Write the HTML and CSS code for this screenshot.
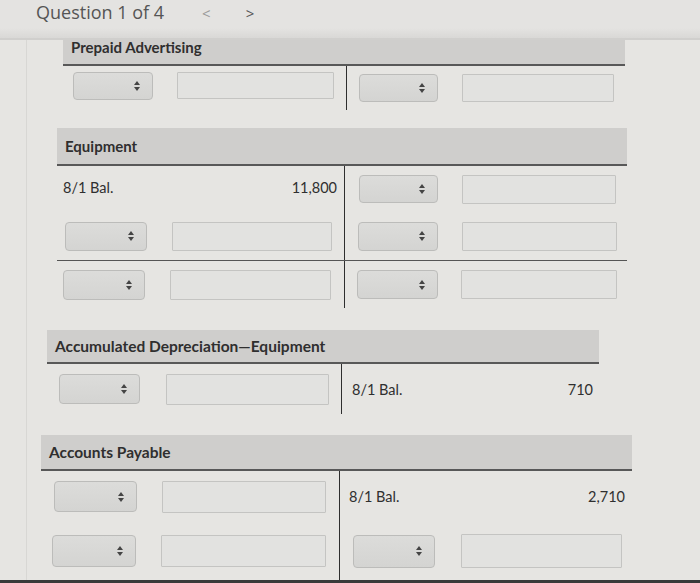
FILE: index.html
```html
<!DOCTYPE html>
<html>
<head>
<meta charset="utf-8">
<link rel="stylesheet" href="styles.css">
</head>
<body>
<div class="topbar">
  <span class="q-title">Question 1 of 4</span>
  <span class="nav prev">&lt;</span>
  <span class="nav next">&gt;</span>
</div>
<div class="page">

  <section class="t t-prepaid">
    <div class="t-head">Prepaid Advertising</div>
    <div class="t-line">
      <div class="cell left">
        <div class="sel s1"><svg viewBox="0 0 6 10" class="arr"><path d="M3 0L6 4H0Z M3 10L0 6H6Z"/></svg></div>
        <input class="inp i1" type="text">
      </div>
      <div class="cell right">
        <div class="sel s2"><svg viewBox="0 0 6 10" class="arr"><path d="M3 0L6 4H0Z M3 10L0 6H6Z"/></svg></div>
        <input class="inp i2" type="text">
      </div>
    </div>
  </section>

  <section class="t t-equip">
    <div class="t-head">Equipment</div>
    <div class="t-line r1">
      <div class="cell left text"><span>8/1 Bal.</span><span>11,800</span></div>
      <div class="cell right">
        <div class="sel s2"><svg viewBox="0 0 6 10" class="arr"><path d="M3 0L6 4H0Z M3 10L0 6H6Z"/></svg></div>
        <input class="inp i2" type="text">
      </div>
    </div>
    <div class="t-line r2">
      <div class="cell left">
        <div class="sel s1"><svg viewBox="0 0 6 10" class="arr"><path d="M3 0L6 4H0Z M3 10L0 6H6Z"/></svg></div>
        <input class="inp i1" type="text">
      </div>
      <div class="cell right">
        <div class="sel s2"><svg viewBox="0 0 6 10" class="arr"><path d="M3 0L6 4H0Z M3 10L0 6H6Z"/></svg></div>
        <input class="inp i2" type="text">
      </div>
    </div>
    <div class="t-line r3">
      <div class="cell left">
        <div class="sel s1"><svg viewBox="0 0 6 10" class="arr"><path d="M3 0L6 4H0Z M3 10L0 6H6Z"/></svg></div>
        <input class="inp i1" type="text">
      </div>
      <div class="cell right">
        <div class="sel s2"><svg viewBox="0 0 6 10" class="arr"><path d="M3 0L6 4H0Z M3 10L0 6H6Z"/></svg></div>
        <input class="inp i2" type="text">
      </div>
    </div>
  </section>

  <section class="t t-accum">
    <div class="t-head">Accumulated Depreciation&#8212;Equipment</div>
    <div class="t-line">
      <div class="cell left">
        <div class="sel s1"><svg viewBox="0 0 6 10" class="arr"><path d="M3 0L6 4H0Z M3 10L0 6H6Z"/></svg></div>
        <input class="inp i1" type="text">
      </div>
      <div class="cell right text"><span>8/1 Bal.</span><span>710</span></div>
    </div>
  </section>

  <section class="t t-ap">
    <div class="t-head">Accounts Payable</div>
    <div class="t-line r1">
      <div class="cell left">
        <div class="sel s1"><svg viewBox="0 0 6 10" class="arr"><path d="M3 0L6 4H0Z M3 10L0 6H6Z"/></svg></div>
        <input class="inp i1" type="text">
      </div>
      <div class="cell right text"><span>8/1 Bal.</span><span>2,710</span></div>
    </div>
    <div class="t-line r2">
      <div class="cell left">
        <div class="sel s1"><svg viewBox="0 0 6 10" class="arr"><path d="M3 0L6 4H0Z M3 10L0 6H6Z"/></svg></div>
        <input class="inp i1" type="text">
      </div>
      <div class="cell right">
        <div class="sel s2"><svg viewBox="0 0 6 10" class="arr"><path d="M3 0L6 4H0Z M3 10L0 6H6Z"/></svg></div>
        <input class="inp i2" type="text">
      </div>
    </div>
  </section>

</div>
<div class="bezel"></div>
</body>
</html>
```

FILE: styles.css
```css
html, body {
  margin: 0;
  padding: 0;
}
body {
  width: 700px;
  height: 583px;
  overflow: hidden;
  background: #e6e5e2;
  font-family: Lato, "Liberation Sans", sans-serif;
  color: #2f2f2f;
  display: flex;
  flex-direction: column;
}
.topbar {
  height: 38px;
  flex: 0 0 38px;
  background: linear-gradient(#e4e3e1 0, #e4e3e1 28px, #d9d8d6 38px);
  border-bottom: 2px solid #d0cfcd;
  display: flex;
  align-items: center;
  font-family: "Open Sans", "Liberation Sans", sans-serif;
  color: #555;
  position: relative;
  z-index: 2;
}
.q-title {
  font-size: 18px;
  margin-left: 36px;
  margin-top: -14px;
}
.nav {
  font-size: 15px;
  margin-top: -12px;
  color: #9a9a9a;
}
.prev { margin-left: 38px; }
.next { margin-left: 35px; color: #555; }

.page {
  flex: 1 1 auto;
  border-left: 1px solid #d8d7d4;
  margin-left: 26px;
}

.t-head {
  background: #cfcecc;
  border-bottom: 2px solid #585858;
  font-weight: 700;
  font-size: 15px;
  display: flex;
  align-items: center;
  padding-left: 8px;
}
.t-line {
  display: grid;
}
.cell {
  display: flex;
  align-items: center;
}
.cell.right {
  border-left: 1px solid #2e2e2e;
}
.cell.text {
  justify-content: space-between;
  font-size: 14.5px;
}
.sel {
  box-sizing: border-box;
  background: linear-gradient(#dcdcda, #d4d4d2);
  border: 1px solid #bcbcba;
  border-radius: 4px;
  display: flex;
  align-items: center;
  justify-content: flex-end;
  padding-right: 12px;
}
.arr {
  width: 6px;
  height: 10px;
  fill: #444;
}
.inp {
  box-sizing: border-box;
  background: #e2e2e0;
  border: 1px solid #c4c4c2;
  border-radius: 1px;
  margin: 0;
  padding: 0;
  outline: none;
}

/* Prepaid Advertising */
.t-prepaid {
  margin-left: 36px;
  width: 562px;
}
.t-prepaid .t-head {
  height: 24px;
  align-items: flex-start;
  line-height: 14px;
}
.t-prepaid .t-line {
  grid-template-columns: 283px 1fr;
  height: 44px;
}
.t-prepaid .left { padding-left: 10px; align-items: flex-start; padding-top: 6px; }
.t-prepaid .right { padding-left: 12px; align-items: flex-start; padding-top: 8px; }
.t-prepaid .left .sel { width: 80px; height: 28px; }
.t-prepaid .left .inp { width: 157px; height: 27px; margin-left: 24px; }
.t-prepaid .right .sel { width: 79px; height: 28px; }
.t-prepaid .right .inp { width: 152px; height: 28px; margin-left: 24px; }

/* Equipment */
.t-equip {
  margin-left: 30px;
  margin-top: 18px;
  width: 570px;
}
.t-equip .t-head { height: 36px; padding-top: 0; }
.t-equip .t-line { grid-template-columns: 287px 1fr; }
.t-equip .r1 { height: 46px; }
.t-equip .r2 { height: 48px; }
.t-equip .r3 { height: 47px; border-top: 1px solid #555; }
.t-equip .r1 .left { padding: 0 7px 0 6px; align-items: flex-start; padding-top: 13px; }
.t-equip .r1 .right { padding-left: 14px; }
.t-equip .r1 .right .sel { width: 79px; height: 28px; }
.t-equip .r1 .right .inp { width: 154px; height: 29px; margin-left: 24px; }
.t-equip .r2 .left { padding-left: 8px; }
.t-equip .r2 .left .sel { width: 82px; height: 29px; }
.t-equip .r2 .left .inp { width: 160px; height: 29px; margin-left: 25px; }
.t-equip .r2 .right { padding-left: 13px; }
.t-equip .r2 .right .sel { width: 80px; height: 29px; }
.t-equip .r2 .right .inp { width: 155px; height: 29px; margin-left: 24px; }
.t-equip .r3 .left { padding-left: 6px; }
.t-equip .r3 .left .sel { width: 82px; height: 30px; }
.t-equip .r3 .left .inp { width: 161px; height: 30px; margin-left: 25px; }
.t-equip .r3 .right { padding-left: 12px; }
.t-equip .r3 .right .sel { width: 81px; height: 29px; }
.t-equip .r3 .right .inp { width: 156px; height: 29px; margin-left: 23px; }

/* Accumulated Depreciation */
.t-accum {
  margin-left: 20px;
  margin-top: 22px;
  width: 552px;
}
.t-accum .t-head { height: 32px; font-size: 15.5px; }
.t-accum .t-line { grid-template-columns: 294px 1fr; height: 50px; }
.t-accum .left { padding-left: 12px; }
.t-accum .left .sel { width: 81px; height: 30px; }
.t-accum .left .inp { width: 163px; height: 31px; margin-left: 26px; }
.t-accum .right.text { padding: 0 6px 0 10px; }

/* Accounts Payable */
.t-ap {
  margin-left: 14px;
  margin-top: 21px;
  width: 591px;
}
.t-ap .t-head { height: 34px; font-size: 15.5px; }
.t-ap .t-line { grid-template-columns: 298px 1fr; }
.t-ap .r1 { height: 51px; }
.t-ap .r2 { height: 58px; }
.t-ap .r1 .left { padding-left: 13px; }
.t-ap .r1 .left .sel { width: 83px; height: 31px; }
.t-ap .r1 .left .inp { width: 164px; height: 32px; margin-left: 25px; }
.t-ap .r1 .right.text { padding: 0 7px 0 9px; }
.t-ap .r2 .left { padding-left: 11px; }
.t-ap .r2 .left .sel { width: 84px; height: 32px; }
.t-ap .r2 .left .inp { width: 165px; height: 32px; margin-left: 25px; }
.t-ap .r2 .right { padding-left: 13px; }
.t-ap .r2 .right .sel { width: 82px; height: 33px; }
.t-ap .r2 .right .inp { width: 161px; height: 34px; margin-left: 26px; }

.bezel {
  position: fixed;
  left: 0;
  bottom: 0;
  width: 700px;
  height: 3px;
  background: #3a3a3a;
}
```
